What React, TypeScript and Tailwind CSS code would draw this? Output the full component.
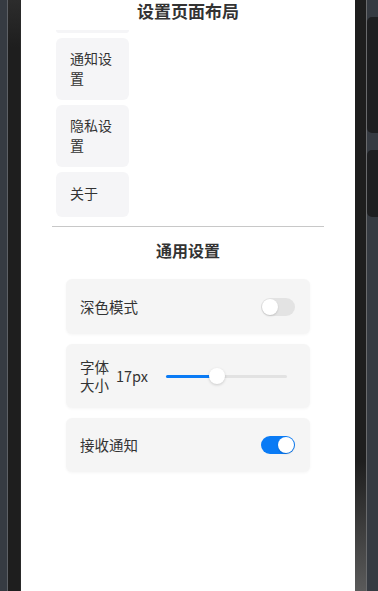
import React from "react";

const font = { fontFamily: '"Noto Sans CJK SC", "Noto Sans", sans-serif' };

function Toggle({ on }: { on: boolean }) {
  return (
    <div
      className={`relative w-[34px] h-[18px] rounded-full ${on ? "bg-[#0a7bf5]" : "bg-[#e3e3e3]"}`}
    >
      <div
        className={`absolute top-[1px] w-[16px] h-[16px] rounded-full bg-white shadow-[0_1px_2px_rgba(0,0,0,0.15)] ${on ? "left-[17px]" : "left-[1px]"}`}
      />
    </div>
  );
}

export default function App() {
  return (
    <div className="w-[378px] h-[591px] flex bg-[#363b42] overflow-hidden" style={font}>
      {/* left frame */}
      <div className="w-[7px] h-full bg-[#363b42]" />
      <div className="w-[1px] h-full bg-[#5d6065]" />
      <div className="w-[12px] h-full bg-[linear-gradient(to_bottom,#2c2c2c_0%,#1e1e1e_8%,#1e1e1e_100%)]" />
      <div className="w-[1px] h-full bg-[#2a2a2a]" />

      {/* screen */}
      <div className="w-[334px] h-full bg-white flex flex-col text-[#333]">
        <div className="h-[24px] leading-[21px] text-center text-[17px] font-bold text-[#333]">
          设置页面布局
        </div>
        <div className="flex flex-col gap-[5px] pl-[35px] mt-[6px]">
          <div className="w-[73px] h-[3px] bg-[#f5f5f7] rounded-b-[6px]" />
          <div className="w-[73px] px-[14px] pt-[10px] pb-[12px] leading-[20px] text-[14px] bg-[#f5f5f7] rounded-[6px]">
            通知设置
          </div>
          <div className="w-[73px] px-[14px] pt-[10px] pb-[12px] leading-[20px] text-[14px] bg-[#f5f5f7] rounded-[6px]">
            隐私设置
          </div>
          <div className="w-[73px] h-[45px] px-[14px] pb-[3px] flex items-center leading-[20px] text-[14px] bg-[#f5f5f7] rounded-[6px]">
            关于
          </div>
        </div>
        <div className="mx-[31px] mt-[9px] h-[1px] bg-[#c8c8c8]" />
        <div className="mt-[13px] h-[24px] leading-[21px] text-center text-[16px] font-bold text-[#333]">
          通用设置
        </div>
        <div className="mx-[45px] mt-[15px] flex flex-col gap-[10px]">
          <div className="h-[55px] px-[14px] pr-[15px] flex items-center justify-between bg-[#f5f5f5] rounded-[6px] shadow-[0_1px_3px_rgba(0,0,0,0.04)]">
            <span className="text-[14.5px]">深色模式</span>
            <Toggle on={false} />
          </div>
          <div className="h-[64px] px-[14px] pr-[23px] flex items-center bg-[#f5f5f5] rounded-[6px] shadow-[0_1px_3px_rgba(0,0,0,0.04)]">
            <span className="w-[30px] text-[14.5px] leading-[18px]">字体大小</span>
            <span className="ml-[6px] text-[14.5px] leading-[18px]">17px</span>
            <div className="ml-[18px] flex-1 relative h-[16px] flex items-center">
              <div className="w-full h-[3px] rounded-full bg-[#e2e2e2]" />
              <div className="absolute left-0 top-[6.5px] w-[50px] h-[3px] rounded-full bg-[#0a7bf5]" />
              <div className="absolute left-[43px] top-0 w-[16px] h-[16px] rounded-full bg-white shadow-[0_1px_3px_rgba(0,0,0,0.18)]" />
            </div>
          </div>
          <div className="h-[54px] px-[14px] pr-[15px] flex items-center justify-between bg-[#f5f5f5] rounded-[6px] shadow-[0_1px_3px_rgba(0,0,0,0.04)]">
            <span className="text-[14.5px]">接收通知</span>
            <Toggle on={true} />
          </div>
        </div>
      </div>

      {/* right frame */}
      <div className="w-[11px] h-full bg-[linear-gradient(to_bottom,#1e1e1e_0%,#1e1e1e_78%,#5a5a5a_100%)]" />
      <div className="w-[1px] h-full bg-[#6a6b6d]" />
      <div className="w-[11px] h-full bg-[#363b42] flex flex-col pt-[17px]">
        <div className="h-[116px] bg-[#1e1f21] rounded-l-[5px]" />
        <div className="mt-[17px] h-[67px] bg-[#1e1f21] rounded-l-[5px]" />
      </div>
    </div>
  );
}
